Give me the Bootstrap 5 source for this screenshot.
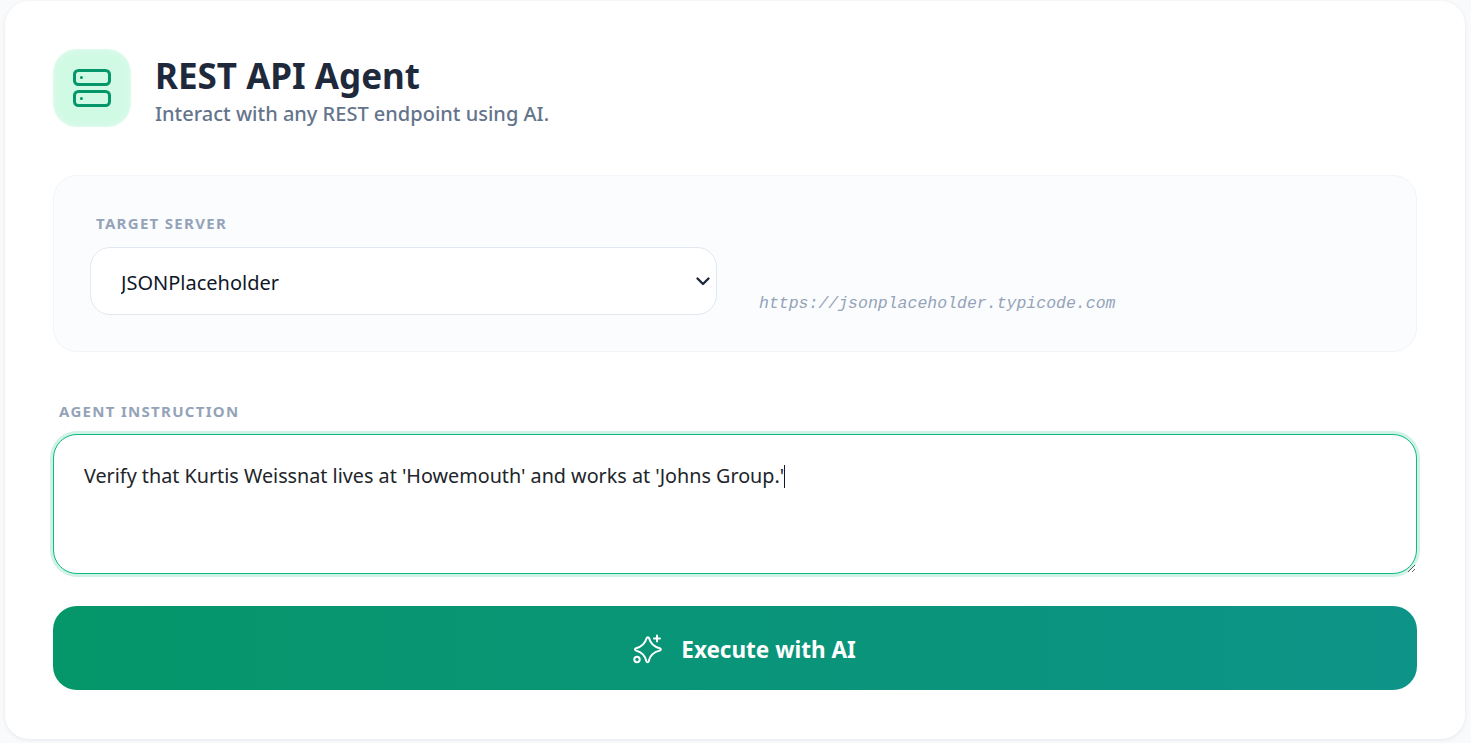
<!DOCTYPE html>
<html lang="en">
<head>
<meta charset="utf-8">
<title>REST API Agent</title>
<link href="https://cdn.jsdelivr.net/npm/bootstrap@5.3.0/dist/css/bootstrap.min.css" rel="stylesheet">
<style>
html,body{height:100%}
body{background:#f8fafc;font-family:"Noto Sans","Open Sans",sans-serif;color:#1e293b;overflow:hidden}
.shell{margin:1px 6px 0 5px;height:738px;background:#fff;border-radius:24px;padding:48px;box-shadow:0 1px 4px rgba(15,23,42,.08)}
.logo-tile{width:78px;height:78px;border-radius:24px;background:#d1fae5;box-shadow:inset 0 0 6px rgba(255,255,255,.5)}
.head-text{padding-top:6px}
.app-title{font-size:35px;font-weight:700;line-height:42px;color:#1e293b;margin:0}
.app-sub{font-size:20px;font-weight:500;line-height:26px;color:#64748b;margin:4px 0 0}
.head-row{gap:24px;margin-bottom:48px}
.server-panel{background:#fbfcfe;border:1px solid #f1f5f9;border-radius:24px;padding:36px;height:177px;margin-bottom:48px}
.cap{font-size:15px;font-weight:700;letter-spacing:1.3px;color:#94a3b8;text-transform:uppercase;line-height:22px;margin:0}
.cap-a{margin-left:6px;margin-bottom:13px}
.cap-b{margin-left:6px;margin-bottom:12px}
.server-select{width:627px;height:68px;border-radius:20px;border:1px solid #e2e8f0;padding:3px 30px 0;font-size:20px;color:#0f172a;background-color:#fff;background-image:url("data:image/svg+xml,%3csvg xmlns='http://www.w3.org/2000/svg' viewBox='0 0 16 16'%3e%3cpath fill='none' stroke='%231e293b' stroke-linecap='round' stroke-linejoin='round' stroke-width='2.4' d='m2.5 5.5 5.500 5.500 5.500-5.500'/%3e%3c/svg%3e");background-position:right 5px center;background-size:16px 16px}
.url-text{font-family:"Liberation Mono","DejaVu Sans Mono",monospace;font-style:italic;font-size:16.5px;color:#94a3b8;margin-left:42px;line-height:22px}
.prompt-wrap{margin-bottom:32px}
.prompt-box{position:relative}
.prompt{display:block;width:100%;height:140px;border-radius:24px;border:1px solid #10b981;box-shadow:0 0 0 3px rgba(16,185,129,.2);padding:26px 30px 24px;font-size:19.75px;line-height:30px;color:#0f172a;outline:0}
.prompt:focus{border-color:#10b981;box-shadow:0 0 0 3px rgba(16,185,129,.2)}
.text-caret{position:absolute;left:731px;top:31px;width:1px;height:23px;background:#0f172a}
.run-btn{width:100%;height:84px;border:0;border-radius:24px;padding:4px 0 0 17px;background:linear-gradient(90deg,#059669,#0d9488);color:#fff;font-size:22.5px;font-weight:700;gap:18px}
.run-btn:hover,.run-btn:active{background:linear-gradient(90deg,#059669,#0d9488)!important;color:#fff!important}
</style>
</head>
<body>
<main class="shell">
  <header class="d-flex align-items-center head-row">
    <div class="logo-tile d-flex align-items-center justify-content-center flex-shrink-0">
      <svg width="48" height="48" viewBox="0 0 24 24" fill="none" stroke="#059669" stroke-width="1.5" stroke-linecap="round" stroke-linejoin="round">
        <rect x="3.25" y="3.25" width="17.5" height="7" rx="2"/>
        <rect x="3.25" y="13.75" width="17.5" height="7" rx="2"/>
        <path d="M6.7 6.7h.01M6.7 17.2h.01"/>
      </svg>
    </div>
    <div class="head-text">
      <h1 class="app-title">REST API Agent</h1>
      <p class="app-sub">Interact with any REST endpoint using AI.</p>
    </div>
  </header>
  <section class="server-panel">
    <label class="cap cap-a d-block" for="srv">Target Server</label>
    <div class="d-flex align-items-end">
      <select id="srv" class="form-select server-select">
        <option>JSONPlaceholder</option>
      </select>
      <span class="url-text">https://jsonplaceholder.typicode.com</span>
    </div>
  </section>
  <section class="prompt-wrap">
    <label class="cap cap-b d-block" for="prm">Agent Instruction</label>
    <div class="prompt-box">
      <textarea id="prm" class="form-control prompt" autofocus>Verify that Kurtis Weissnat lives at 'Howemouth' and works at 'Johns Group.'</textarea>
      <span class="text-caret"></span>
    </div>
  </section>
  <button class="btn run-btn d-flex align-items-center justify-content-center" type="button">
    <svg width="32" height="32" viewBox="0 0 32 32" fill="none" stroke="#fff" stroke-width="2" stroke-linecap="round" stroke-linejoin="round">
      <path d="M15.6 4.2c.5-1.3 2-1.3 2.5 0 1.3 5 4.2 8.3 10.6 10 1.5.5 1.5 2 0 2.4-6.4 1.5-9.700 4.700-11 10.600-.4 1.400-1.900 1.400-2.300 0-1.300-5.700-4.400-9-10.300-10.600-1.500-.5-1.500-2 0-2.400 6-1.500 9-5 10.500-10z"/>
      <path d="M26 1.500v6M23 4.500h6"/>
      <circle cx="6" cy="25.500" r="2.700"/>
    </svg>
    <span>Execute with AI</span>
  </button>
</main>
<script src="https://cdn.jsdelivr.net/npm/bootstrap@5.3.0/dist/js/bootstrap.bundle.min.js"></script>
</body>
</html>
